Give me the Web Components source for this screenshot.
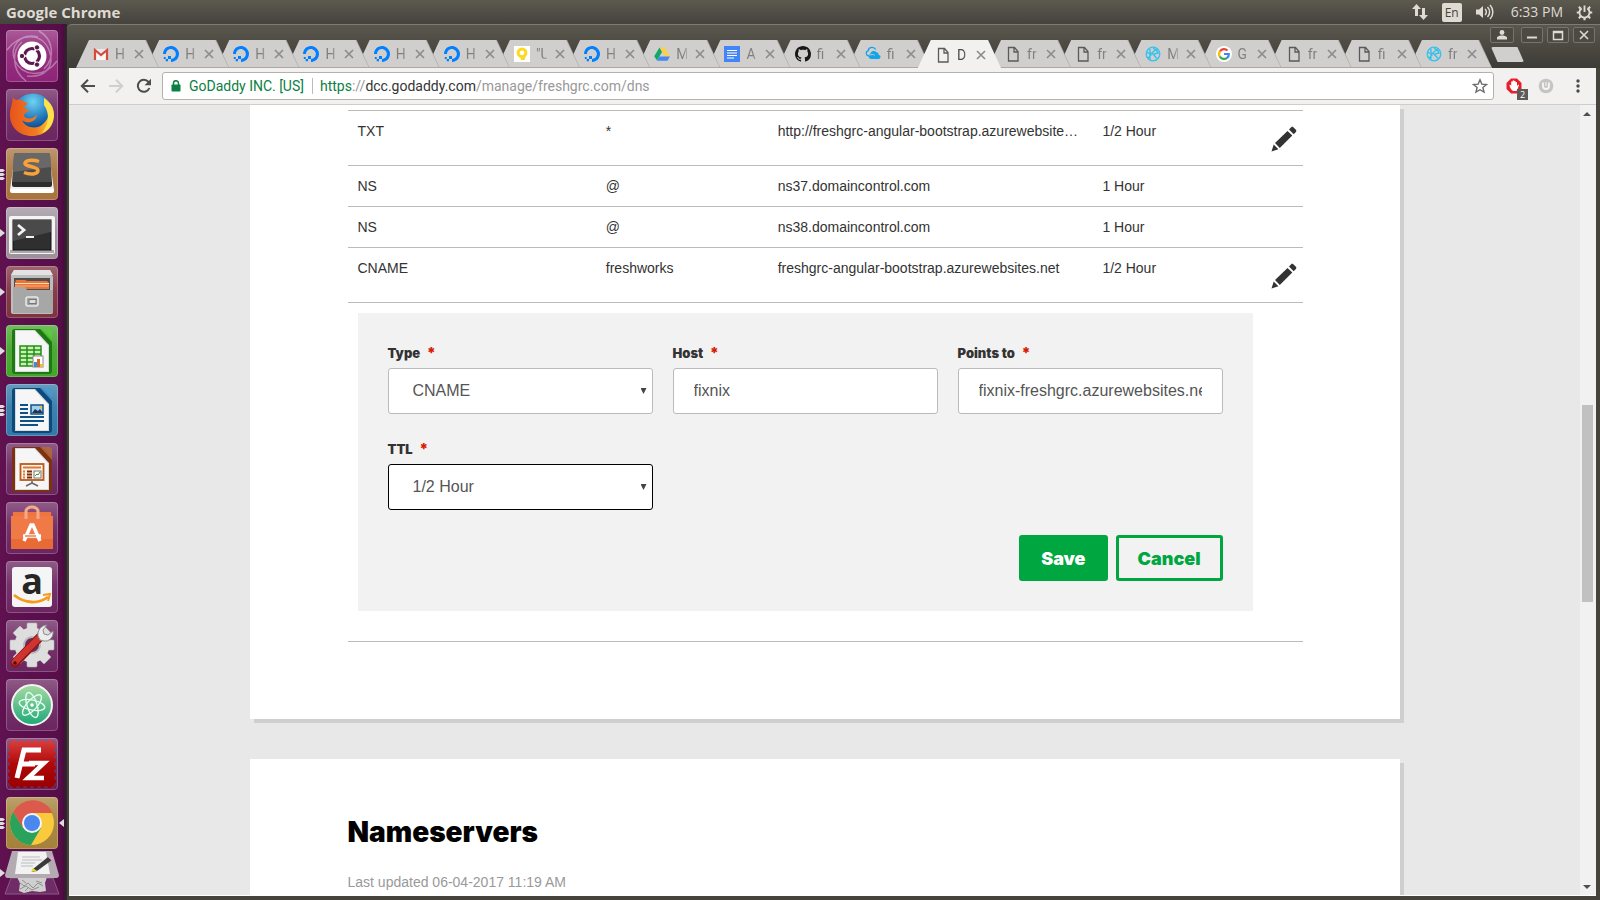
<!DOCTYPE html>
<html lang="en">
<head>
<meta charset="utf-8">
<title>DNS Management</title>
<style>
  html, body { margin: 0; height: 100%; }
  body { font-family: "Liberation Sans", Arial, sans-serif; font-size: 14px; color: #333; overflow: hidden; }
</style>
</head>
<body>
<desktop-shell></desktop-shell>

<script>
/* Shared helper: attaches an open shadow root with the given markup. */
class Base extends HTMLElement {
  connectedCallback() {
    if (this.shadowRoot) return;
    this.attachShadow({ mode: 'open' }).innerHTML =
      '<style>*{box-sizing:border-box}button{font:inherit;color:inherit;border:0;padding:0;margin:0;background:none;cursor:pointer}svg{display:block}</style>' + this.render();
  }
  attr(n, d = '') { return this.getAttribute(n) || d; }
}
const define = (n, c) => customElements.define(n, c);

/* ---------- small icons: [viewBox, markup] ---------- */
const DO = ['0 0 16 16', '<path d="M8 16v-3.1c3.3 0 5.8-3.2 4.5-6.7A4.8 4.8 0 0 0 9.700 3.400C6.200 2.200 3 4.700 3 8H0C0 2.800 5-1.300 10.500.4c2.400.7 4.300 2.700 5.100 5.100C17.300 11 13.200 16 8 16z" fill="#0080ff"/><path d="M5 10h3v3H5zM2.700 13H5v2.200H2.700zM.8 11h1.900v2H.8z" fill="#0080ff"/>'];
const ICONS = {
  gmail: ['0 0 16 16', '<path d="M1 3h14v11H1z" fill="#e8e8e8"/><path d="M3 5l5 4 5-4v9H3z" fill="#f8f8f8"/><path d="M2 14V4l6 5 6-5v10" fill="none" stroke="#d54b3d" stroke-width="2.200"/>'],
  ocean: DO,
  keep: ['0 0 16 16', '<path d="M0 0h16v16H0z" fill="#fff"/><circle cx="8" cy="6.800" r="3.900" fill="none" stroke="#fdd922" stroke-width="3"/><path d="M6.500 10.500h5L10.500 14H7z" fill="#fdd922"/>'],
  drive: ['0 0 16 16', '<path d="M5.500 1.500h5L16 10.500h-5z" fill="#ffcf48"/><path d="M5.500 1.500L8 6 3 14.500.2 10.300z" fill="#17a765"/><path d="M5.500 10.500H16l-2.600 4.200H3z" fill="#4587f4"/>'],
  docs: ['0 0 16 16', '<path d="M0 0h16v16H0z" fill="#4285f4"/><path d="M3 4.500h10M3 7h10M3 9.500h10M3 12h7" stroke="#fff" stroke-width="1.200"/>'],
  github: ['0 0 16 16', '<path fill="#181717" d="M8 0C3.580 0 0 3.580 0 8c0 3.540 2.290 6.530 5.470 7.590.4.070.55-.17.55-.38 0-.19-.01-.82-.01-1.490-2.010.37-2.530-.49-2.690-.94-.09-.23-.48-.94-.82-1.130-.28-.15-.68-.52-.01-.53.63-.01 1.080.58 1.230.82.72 1.210 1.870.87 2.330.66.07-.52.28-.87.51-1.070-1.780-.2-3.640-.89-3.640-3.950 0-.87.31-1.590.82-2.150-.08-.2-.36-1.020.08-2.120 0 0 .67-.21 2.200.82.64-.18 1.320-.27 2-.27s1.360.09 2 .27c1.530-1.040 2.200-.82 2.200-.82.44 1.100.16 1.920.08 2.120.51.56.82 1.270.82 2.150 0 3.070-1.870 3.750-3.650 3.950.29.25.54.73.54 1.480 0 1.070-.01 1.930-.01 2.200 0 .21.15.46.55.38A8.010 8.010 0 0 0 16 8c0-4.420-3.580-8-8-8z"/>'],
  cloud: ['0 0 18 16', '<path d="M5 10H4a2.800 2.800 0 0 1-.5-5.500 4.500 4.500 0 0 1 8.500-1.500" fill="none" stroke="#12a5ea" stroke-width="1.500"/><path d="M7 13.500a3 3 0 0 1-1-5.800A4 4 0 0 1 13 6a3 3 0 0 1 2.500 3 2.300 2.300 0 0 1 .3 4.500z" fill="#12a5ea"/><path d="M5 9.500c2-1 4-1.500 6 0" stroke="#d0cfcd" fill="none"/>'],
  file: ['0 0 16 16', '<path d="M3.500 1.500h6l3.500 4v9.500H3.500z M9 1.500V6h4" fill="none" stroke="#5a5a5a" stroke-width="1.300"/>'],
  fixnix: ['0 0 16 16', '<g fill="none" stroke="#35c1ee"><circle cx="8" cy="8" r="6.800" stroke-width="1.300"/><path d="M5 3v10M5 8.500l6.500-5.500M7 7l5 5.500M2 6l4 3-3 3M11 3l2 4-4 1M8 2l4 3" stroke-width="1.400"/></g>'],
  google: ['0 0 16 16', '<circle cx="8" cy="8" r="8" fill="#fff"/><g fill="none" stroke-width="2.200"><path d="M4 5.300A4.900 4.900 0 0 1 11.500 4.500" stroke="#ea4335"/><path d="M3.800 10.600a5 5 0 0 1 .2-5.400" stroke="#fbbc05"/><path d="M3.800 10.500a4.900 4.900 0 0 0 7.300 1.300" stroke="#34a853"/><path d="M8 8h4.800c.1 1.500-.5 2.900-1.700 4" stroke="#4285f4"/></g>'],
  back: ['0 0 16 16', '<path d="M15 8H2M8 1.800L1.800 8 8 14.200" fill="none" stroke="#4d4d4d" stroke-width="2"/>'],
  forward: ['0 0 16 16', '<path d="M1 8h13M8 1.800L14.200 8 8 14.200" fill="none" stroke="#cfcfcf" stroke-width="2"/>'],
  reload: ['0 0 16 16', '<path d="M13.400 10A6 6 0 1 1 12.500 4L14 5.600" fill="none" stroke="#4d4d4d" stroke-width="2"/><path d="M15 .8v6.400H8.600z" fill="#4d4d4d"/>'],
  lock: ['0 0 10 12', '<path d="M2.500 5V3.200a2.500 2.500 0 0 1 5 0V5" fill="none" stroke="#0b8043" stroke-width="1.500"/><rect x=".5" y="4.500" width="9" height="7" rx=".8" fill="#0b8043"/>'],
  star: ['0 0 16 16', '<path d="M8 1.800l1.800 4.300 4.700.4-3.600 3 1.100 4.600L8 11.700l-4 2.400 1.100-4.600-3.600-3 4.700-.4z" fill="none" stroke="#6b6b6b" stroke-width="1.400"/>'],
  abp: ['0 0 16 16', '<path d="M5 .5h6L15.500 5v6L11 15.500H5L.5 11V5z" fill="#e5202b"/><path d="M5 11c-1-1.500-1.500-3-1.500-4 .8-.5 1.300 0 1.700 1V4c.1-.9 1.300-.9 1.400 0V3c.1-.9 1.400-.9 1.500 0v.5c.1-.9 1.400-.9 1.500 0V4.500c.2-.8 1.300-.8 1.400 0V8l1 -1.200c.9-.3 1.200.3.8 1L11 12.500c-1.500 1-4.500 1-6-1.500z" fill="#fff"/>'],
  ublock: ['0 0 16 16', '<circle cx="8" cy="8" r="7.300" fill="#c4c4c4"/><path d="M5 4.500V8a3 3 0 0 0 6 0V4.500" fill="none" stroke="#f5f5f5" stroke-width="1.800"/><path d="M8 4v4" stroke="#f5f5f5"/>'],
  dots: ['0 0 16 16', '<g fill="#4a4a4a"><circle cx="8" cy="3" r="1.700"/><circle cx="8" cy="8" r="1.700"/><circle cx="8" cy="13" r="1.700"/></g>'],
  updown: ['0 0 18 18', '<g fill="#dfdbd2"><path d="M5.500 1L10 6H7v7H4V6H1z"/><path d="M12.500 17L8 12h3V5h3v7h3z"/></g>'],
  volume: ['0 0 20 18', '<path d="M1 6.500h3L8 3v12l-4-3.500H1z" fill="#dfdbd2"/><path d="M10 6a4 4 0 0 1 0 6M12.500 4a7 7 0 0 1 0 10M15 2a10 10 0 0 1 0 14" fill="none" stroke="#dfdbd2" stroke-width="1.500"/>'],
  power: ['0 0 18 18', '<path d="M6 4.600a5.400 5.400 0 1 0 6 0M9 1.500v7" fill="none" stroke="#dfdbd2" stroke-width="2"/><g stroke="#dfdbd2" stroke-width="2.200"><path d="M3 3l2 2M15 3l-2 2M.8 9H3.500M17.200 9h-2.700M3 15l2-2M15 15l-2-2M9 17.200v-2.700"/></g>'],
  pencil: ['0 0 26 26', '<path d="M.5 25.500l2.200-7 4.700 4.700zM4 17L16.500 5l4.800 4.600L8.800 22zM18 3.500l2.200-2.300c.6-.6 1.500-.6 2.100 0l2.600 2.600c.6.6.6 1.500 0 2.100l-2.200 2.300z" fill="#333"/>'],
  user: ['0 0 12 12', '<circle cx="6" cy="3.500" r="2.400" fill="#dfdbd2"/><path d="M1 10.500V8.200C2 7 4 6.500 6 6.500s4 .5 5 1.700v2.300z" fill="#dfdbd2"/>'],
  min: ['0 0 12 12', '<path d="M1 8.500h10" stroke="#dfdbd2" stroke-width="2"/>'],
  max: ['0 0 12 12', '<path d="M1.500 2.500h9v8h-9zM1.500 3.500h9" fill="none" stroke="#dfdbd2" stroke-width="1.500"/>'],
  close: ['0 0 12 12', '<path d="M2 2l8 8M10 2l-8 8" stroke="#dfdbd2" stroke-width="1.600"/>'],
  tabx: ['0 0 10 10', '<path d="M1 1l8 8M9 1L1 9" stroke="#8c8c8c" stroke-width="1.700"/>'],
};
define('ui-icon', class extends Base {
  render() {
    const [vb, body] = ICONS[this.attr('name')];
    const s = this.attr('size', '16');
    return `<style>:host{display:block;flex:none}</style><svg width="${s}" height="${s}" viewBox="${vb}" aria-hidden="true">${body}</svg>`;
  }
});

/* ---------- launcher artwork, each on a 52x52 tile ---------- */
const libre = (dark, mid, body) => `<path d="M9 4h27l10 10v32a3 3 0 0 1-3 3H9a3 3 0 0 1-3-3V7a3 3 0 0 1 3-3z" fill="${dark}"/><path d="M34 4h9a3 3 0 0 1 3 3v10z" fill="${mid}" opacity=".8"/><path d="M9 5h20l14 15v27H9z" fill="#d9d9d9"/><path d="M10 6h18.500L42 20.500V46H10z" fill="#f6f6f6"/>${body}`;
const gear = Array.from({ length: 8 }, (_, i) => `<rect x="21" y="3" width="10" height="10" rx="1" transform="rotate(${i * 45} 26 25)"/>`).join('');
const stamp = Array.from({ length: 7 }, (_, i) => { const p = 5 + i * 7; return `<circle cx="${p}" cy="2" r="2"/><circle cx="${p}" cy="50" r="2"/><circle cx="2" cy="${p}" r="2"/><circle cx="50" cy="${p}" r="2"/>`; }).join('');
const ART = {
  ubuntu: '<g fill="none" stroke="#fff" opacity=".35"><path d="M1 20C15 2 36 3 43 20s-5 28-22 26M51 31C37 50 15 45 9 31S14 2 32 7M20 51C5 40 6 20 16 12M33 1c14 8 17 26 5 38" stroke-width="1.500"/></g><circle cx="26" cy="26" r="14.500" fill="#fff"/><circle cx="26" cy="26" r="7.500" fill="none" stroke="#5e1a50" stroke-width="3.200"/><path d="M26 26H16M26 26l5-9M26 26l5 9" stroke="#fff" stroke-width="1.600"/><g fill="#5e1a50" stroke="#fff" stroke-width="1"><circle cx="16" cy="26" r="2.700"/><circle cx="31" cy="17.400" r="2.700"/><circle cx="31" cy="34.600" r="2.700"/></g>',
  firefox: '<defs><radialGradient id="a" cx=".5" cy=".2" r=".8"><stop offset="0" stop-color="#6fd3f3"/><stop offset=".6" stop-color="#1a6db5"/><stop offset="1" stop-color="#0b2a63"/></radialGradient><linearGradient id="b" x1="0" x2="1"><stop offset="0" stop-color="#e8541c"/><stop offset=".6" stop-color="#ef7c20"/><stop offset="1" stop-color="#ffd93b"/></linearGradient></defs><circle cx="27" cy="25" r="20.500" fill="url(#a)"/><path d="M7 8c1 2 2 3 4 3 3-1 6 0 7 2 2 0 3 1 4 2-2 1-4 2-4 4 1 1 5 1 5 3-2 1-5 2-5 5 2 3 8 4 13-1-1 8-11 9-15 5 3 8 15 10 21 4 7-6 8-15 3-24 5 3 8 8 8 15 0 12-9 21-22 21C13 47 4 38 4 26c0-7 2-9 3-18z" fill="url(#b)"/><path d="M38 9c8 5 11 14 9 22-2 7-6 11-11 13 7-8 8-20 2-28z" fill="#ffe04a"/>',
  sublime: '<path d="M9 6h34l5 36H4z" fill="#f0f0f0"/><path d="M4 41h44v2a2 2 0 0 1-2 2H6a2 2 0 0 1-2-2z" fill="#fff"/><path d="M10 5h32a2 2 0 0 1 2 2l2 27H6L8 7a2 2 0 0 1 2-2z" fill="#4c4c4c"/><path d="M10 5h32a2 2 0 0 1 2 2l1 12L7 24 8 7a2 2 0 0 1 2-2z" fill="#686868"/><path d="M6 34h40v3a2 2 0 0 1-2 2H8a2 2 0 0 1-2-2z" fill="#2d2d2d"/><path d="M33 13.500c-5-2-13-2-14 1.500s13 3.500 13 7.500-8 4.500-14 2" fill="none" stroke="#f9a23a" stroke-width="3.500"/>',
  terminal: '<rect x="3" y="9" width="46" height="38" rx="2" fill="#f4f4f4"/><rect x="4" y="43" width="44" height="3" fill="#aaa"/><rect x="7" y="13" width="38" height="30" fill="#2f2f2f" stroke="#111"/><path d="M7 13h38v12L7 34z" fill="#4a4a4a"/><path d="M12 18l6 5-6 5" fill="none" stroke="#f2f2f2" stroke-width="2.800"/><path d="M20 30h8" stroke="#f2f2f2" stroke-width="2"/>',
  files: '<path d="M8 4h36l3 7v35a2 2 0 0 1-2 2H7a2 2 0 0 1-2-2V9z" fill="#bdbdbd"/><path d="M8 4h36l3 5H5z" fill="#e3e3e3"/><path d="M8 12h36v12H8z" fill="#4e4e4e"/><path d="M10 14h9l2 1h20l2 2v6H9v-6z" fill="#e8743a"/><path d="M9 17.500h34" stroke="#ffd9a8"/><path d="M9 20h34" stroke="#f6b27a"/><path d="M7 21h12l2 3h26v21a2 2 0 0 1-2 2H7z" fill="#a7a7a7"/><rect x="20" y="31" width="12" height="9" rx="2" fill="#a7a7a7" stroke="#e9e9e9" stroke-width="1.500"/><rect x="23" y="33.500" width="7" height="4" fill="#ddd" stroke="#777"/>',
  calc: libre('#1d7a12', '#5bcb3f', '<path d="M14 21h21v20H14z" fill="#c8f3b0"/><path d="M14 21h21v20H14zM14 25h21M14 29h21M14 33h21M14 37h21M21 21v20M28 21v20" fill="none" stroke="#238f18" stroke-width="1.500"/><rect x="27" y="31" width="10" height="11" fill="#fff" stroke="#888"/><path d="M28 42v-5h3v5z" fill="#3a8fd0"/><path d="M31 42v-8h3v8z" fill="#e2632a"/><path d="M34 42v-3h3v3z" fill="#f0c02c"/>'),
  writer: libre('#0a4a7d', '#4d97cc', '<path d="M14 21h8M14 25h8M14 29h8M14 33h24M14 37h24M14 41h18" stroke="#0f5288" stroke-width="2"/><rect x="25" y="21" width="12" height="9" fill="#9fd0f0" stroke="#0f5288" stroke-width="1.500"/><path d="M26 29l3-4 3 2 2-2 3 4z" fill="#23384a"/><circle cx="35" cy="23" r="1.200" fill="#f0c02c"/>'),
  impress: libre('#7c3110', '#b46c3a', '<rect x="14.500" y="21" width="23" height="16" fill="#fff2e2" stroke="#b55a22" stroke-width="1.800"/><path d="M17 24.500h18" stroke="#d87a3a" stroke-width="2"/><path d="M17 28.500h2M17 31.500h2M17 34.500h2" stroke="#d87a3a" stroke-width="2"/><path d="M21 28.500h5M21 31.500h5M21 34.500h5" stroke="#7a2c0e" stroke-width="2"/><rect x="28" y="28" width="7" height="7" fill="#fff" stroke="#777"/><path d="M29 33l2-2 1 1 2-3" fill="none" stroke="#2f9a2b"/><path d="M26 38v2l-6 3M26 40l6 3" fill="none" stroke="#666" stroke-width="1.500"/>'),
  software: '<path d="M7 10h38l2 36H5z" fill="#ee7440"/><path d="M5 14h42v32H5z" fill="#f07a45"/><path d="M5 37h42v10H5z" fill="#e86a35"/><path d="M20 17V9a6 4 0 0 1 12 0v8" fill="none" stroke="#f6a988" stroke-width="3"/><path d="M18 39l7-16h2l7 16" fill="none" stroke="#fff" stroke-width="3.500"/><path d="M17 34h18" stroke="#fff" stroke-width="3.500"/><path d="M19 34h11" stroke="#e2602a" stroke-width="1.200"/>',
  amazon: '<rect x="6" y="6" width="40" height="40" rx="3" fill="#f5f5f5"/><text x="26" y="33" text-anchor="middle" font-family="Open Sans, sans-serif" font-weight="700" font-size="36" fill="#262626">a</text><path d="M8 34c11 9 25 9 34 2" fill="none" stroke="#f79a1c" stroke-width="2.800"/><path d="M37 34l7-1-2 7" fill="none" stroke="#f79a1c" stroke-width="2"/>',
  settings: `<g fill="#dedede" stroke="#b4b4b4" stroke-width=".6">${gear}</g><circle cx="26" cy="25" r="17.500" fill="#dedede"/><circle cx="26" cy="25" r="8" fill="#6d2c62" stroke="#b8b8b8" stroke-width="2"/><path d="M9 43L34 17" stroke="#8e1515" stroke-width="9" stroke-linecap="round"/><path d="M9 42L34 17" stroke="#cf3430" stroke-width="6.500" stroke-linecap="round"/><circle cx="9" cy="43" r="1.800" fill="#4a0d0d"/><path d="M32 16c-1-5 3-11 9-11l-4 5 1 4 4 1 5-4c1 6-4 11-9 10l-4-1z" fill="#ececec" stroke="#8b8b8b"/>`,
  atom: '<defs><linearGradient id="a" x2="0" y2="1"><stop offset="0" stop-color="#a6dba0"/><stop offset="1" stop-color="#1fa77a"/></linearGradient></defs><circle cx="26" cy="26" r="20" fill="url(#a)" stroke="#f4f4f4" stroke-width="2"/><g fill="none" stroke="#e4fff0" stroke-width="1.400"><ellipse cx="26" cy="26" rx="13" ry="5" transform="rotate(12 26 26)"/><ellipse cx="26" cy="26" rx="13" ry="5" transform="rotate(72 26 26)"/><ellipse cx="26" cy="26" rx="13" ry="5" transform="rotate(132 26 26)"/></g><circle cx="26" cy="26" r="1.800" fill="#fff"/>',
  filezilla: `<defs><mask id="m"><path d="M2 2h48v48H2z" fill="#fff"/><g fill="#000">${stamp}</g></mask><linearGradient id="a" x2="0" y2="1"><stop offset="0" stop-color="#d94040"/><stop offset=".5" stop-color="#b00808"/><stop offset="1" stop-color="#980000"/></linearGradient></defs><path d="M2 2h48v48H2z" fill="url(#a)" mask="url(#m)"/><g fill="none" stroke="#fff" stroke-width="5"><path d="M35 12H18L11 40M14 26h15"/><path d="M23 25h15L22 40h16" stroke-width="4.500"/></g>`,
  chrome: '<circle cx="26" cy="26" r="22" fill="#f9cb3c"/><path d="M26 16h20.500A22 22 0 0 0 7 15l9.500 16z" fill="#db5a4c"/><path d="M7 15a22 22 0 0 0 18 33l10-17-18 0z" fill="#29a25c"/><circle cx="26" cy="26" r="10" fill="#f4f4f4"/><circle cx="26" cy="26" r="8" fill="#4a87ee"/>',
};
define('launcher-tile', class extends Base {
  render() {
    const n = +this.attr('running', '0');
    const pip = '<svg width="5" height="3" viewBox="0 0 5 3"><path d="M0 0h3l2 1.500L3 3H0z" fill="#ddd"/></svg>';
    const pips = n === 1 ? '<svg width="5" height="8" viewBox="0 0 5 8"><path d="M0 0l5 4-5 4z" fill="#ddd"/></svg>' : pip.repeat(n);
    return `<style>
      :host{display:grid;grid-template-columns:6px 52px 6px;align-items:center}
      .pips{display:grid;gap:1px}
      button{width:52px;height:52px;border-radius:4px;background:linear-gradient(#ffffff40,#ffffff10 45%,#ffffff00),${this.attr('tint', '#6b2560')};box-shadow:inset 0 0 0 1px #ffffff38}
      button svg{overflow:visible}
      .focus{justify-self:end}
    </style>
    <span class="pips">${pips}</span>
    <button type="button" aria-label="${this.attr('app')}"><svg width="52" height="52" viewBox="0 0 52 52">${ART[this.attr('app')]}</svg></button>
    <span class="focus">${this.hasAttribute('focused') ? '<svg width="5" height="8" viewBox="0 0 5 8"><path d="M5 0L0 4l5 4z" fill="#ddd"/></svg>' : ''}</span>`;
  }
});
define('launcher-stack', class extends Base {
  render() {
    return `<style>:host{display:grid;grid-template-columns:4px 56px;align-items:center}</style>
    <svg width="5" height="8" viewBox="0 0 5 8"><path d="M0 0l5 4-5 4z" fill="#ddd"/></svg>
    <svg width="56" height="46" viewBox="0 0 56 46"><path d="M7 28h42l6 16H1z" fill="#6f2c66" stroke="#8a5a82"/><path d="M13 27h30l-2 6 1 8-6 1-8-1-8 2-5-2 1-8z" fill="#cfcfcf"/><path d="M15 32l5 4 4-3 5 5 5-5 5 3M16 39l6-3 6 4 7-3M18 30l4 3M32 31l6 2M24 38l-3 3" stroke="#8f8f8f" fill="none"/><path d="M8 1h40l7 24a3 3 0 0 1-2 3H3a3 3 0 0 1-2-3z" fill="#b4aab2"/><path d="M14 2h28l4 22H11z" fill="#f2f2f2"/><path d="M18 7h18M18 10h20M17 13h14M17 16h12" stroke="#bbb"/><path d="M29 19L44 7l4 3-15 11-5 1z" fill="#3a3a3a"/><path d="M44 7l3-1 3 2-2 3z" fill="#dca0c8"/><path d="M27 22l2-4 4 3z" fill="#e5d83a"/></svg>`;
  }
});
define('app-launcher', class extends Base {
  render() {
    return `<style>
      :host{display:block;width:66px;background:linear-gradient(90deg,#5f1150,#560e49 60px,#4a0b3e 64px,#33202e 65px);overflow:hidden}
      nav{display:flex;flex-direction:column;gap:7px;padding-top:6px}
      launcher-stack{margin-top:-6px}
    </style><nav aria-label="Launcher">
      <launcher-tile app="ubuntu" tint="#8e2478"></launcher-tile>
      <launcher-tile app="firefox"></launcher-tile>
      <launcher-tile app="sublime" tint="#a8743f" running="3"></launcher-tile>
      <launcher-tile app="terminal" tint="#9d909b" running="1"></launcher-tile>
      <launcher-tile app="files" tint="#7e3240" running="1"></launcher-tile>
      <launcher-tile app="calc" tint="#43a52b" running="1"></launcher-tile>
      <launcher-tile app="writer" tint="#3279a8" running="3"></launcher-tile>
      <launcher-tile app="impress"></launcher-tile>
      <launcher-tile app="software"></launcher-tile>
      <launcher-tile app="amazon"></launcher-tile>
      <launcher-tile app="settings"></launcher-tile>
      <launcher-tile app="atom"></launcher-tile>
      <launcher-tile app="filezilla"></launcher-tile>
      <launcher-tile app="chrome" tint="#a5813a" running="3" focused></launcher-tile>
      <launcher-stack></launcher-stack>
    </nav>`;
  }
});

/* ---------- top panel ---------- */
define('top-panel', class extends Base {
  render() {
    return `<style>
      :host{display:flex;align-items:center;height:24px;padding:0 7px 0 6px;background:linear-gradient(#5c594f,#45433d);color:#dfdbd2;font:14px/24px "Open Sans",sans-serif}
      strong{flex:1;font-size:15px}
      .status{display:flex;align-items:center;gap:13px}
      .lang{height:19px;width:20px;border-radius:2px;background:#dfdbd2;color:#45433d;font:12px/20px "Open Sans",sans-serif;text-align:center}
      time{padding-left:3px}
    </style>
    <strong>Google Chrome</strong>
    <div class="status">
      <ui-icon name="updown" size="18"></ui-icon><span class="lang">En</span>
      <ui-icon name="volume" size="20"></ui-icon><time>6:33 PM</time><ui-icon name="power" size="17"></ui-icon>
    </div>`;
  }
});

/* ---------- browser chrome ---------- */
define('browser-tab', class extends Base {
  render() {
    const active = this.hasAttribute('active');
    return `<style>
      :host{display:block;position:relative;flex:1 1 0;min-width:0;height:28px;margin-right:-13px;--cut:polygon(0 100%,13px 0,calc(100% - 13px) 0,100% 100%)}
      .edge{height:28px;background:${active ? '#f2f1f0' : '#a9a8a6'};clip-path:var(--cut);padding-right:1px}
      .fill{height:${active ? 28 : 27}px;display:flex;align-items:center;padding:1px 0 0 17px;background:${active ? '#f2f1f0' : '#d0cfcd'};clip-path:var(--cut)}
      .title{width:11px;margin:0 8px 0 6px;overflow:hidden;white-space:nowrap;font:14px/20px Roboto,sans-serif;color:${active ? '#4c4c4c' : '#808080'};-webkit-mask:linear-gradient(90deg,#000 60%,#0006)}
      button{flex:none}
    </style>
    <div class="edge"><div class="fill"><ui-icon name="${this.attr('icon')}"></ui-icon><span class="title"><slot></slot></span>
    <button type="button" aria-label="Close tab"><ui-icon name="tabx" size="10"></ui-icon></button></div></div>`;
  }
});
define('tab-strip', class extends Base {
  render() {
    const tabs = [['gmail', 'H'], ['ocean', 'H'], ['ocean', 'H'], ['ocean', 'H'], ['ocean', 'H'], ['ocean', 'H'], ['keep', '"U'], ['ocean', 'H'], ['drive', 'M'], ['docs', 'A'], ['github', 'fi'], ['cloud', 'fi'], ['file', 'D', 1], ['file', 'fr'], ['file', 'fr'], ['fixnix', 'M'], ['google', 'G'], ['file', 'fr'], ['file', 'fi'], ['fixnix', 'fr']];
    return `<style>
      :host{display:flex;height:44px;border-radius:5px 0 0 0;border-top:1px solid #7d7b74;background:linear-gradient(#5a574e,#3d3b36)}
      .tabs{flex:1;display:flex;align-items:flex-end;padding-right:13px;min-width:0}
      .new{width:33px;height:15px;margin:22px 0 0 -1px;background:#d0cfcd;border-radius:2px;clip-path:polygon(0 0,80% 0,100% 100%,20% 100%)}
      .side{position:relative;width:108px}
      .win{display:flex;gap:4px;padding-top:2px;position:absolute;right:5px;top:0}
      .win button{width:22px;height:16px;display:grid;place-items:center;border:1px solid #77746b;border-radius:2px;background:#4c4a43}
      .win button:first-child{width:24px;margin-right:3px}
    </style>
    <div class="tabs">${tabs.map(([i, t, a], n) => `<browser-tab icon="${i}" style="z-index:${a ? 30 : 20 - n}"${a ? ' active' : ''}>${t}</browser-tab>`).join('')}</div>
    <div class="side"><button type="button" class="new" aria-label="New tab"></button>
      <div class="win">${['user', 'min', 'max', 'close'].map(i => `<button type="button" aria-label="${i}"><ui-icon name="${i}" size="12"></ui-icon></button>`).join('')}</div></div>`;
  }
});
define('tool-bar', class extends Base {
  render() {
    return `<style>
      :host{display:flex;align-items:center;height:37px;padding:0 10px 0 11px;background:#f2f1f0;border-bottom:1px solid #cfcdca;gap:12px}
      .omni{flex:1;height:28px;display:flex;align-items:center;margin-left:-2px;padding:0 5px 0 7px;border:1px solid #b3b1ae;border-radius:3px;background:#fff;font:14px/20px Roboto,sans-serif;color:#999}
      .cert{color:#0b8043;padding:0 8px 0 7px;border-right:1px solid #bbb;line-height:16px;white-space:nowrap}
      .url{flex:1;padding-left:7px}
      .s{color:#0b8043}.d{color:#333}
      .ext{display:flex;gap:16px;align-items:center}
      .abp{position:relative}
      .abp b{position:absolute;left:11px;top:11px;width:11px;height:11px;background:#5b5b5b;color:#fff;font:9px/11px "Open Sans",sans-serif;text-align:center}
    </style>
    <button type="button" aria-label="Back"><ui-icon name="back"></ui-icon></button>
    <button type="button" aria-label="Forward"><ui-icon name="forward"></ui-icon></button>
    <button type="button" aria-label="Reload"><ui-icon name="reload"></ui-icon></button>
    <div class="omni"><ui-icon name="lock" size="12"></ui-icon><span class="cert">GoDaddy INC. [US]</span>
      <span class="url"><span class="s">https</span>://<span class="d">dcc.godaddy.com</span>/manage/freshgrc.com/dns</span>
      <button type="button" aria-label="Bookmark"><ui-icon name="star"></ui-icon></button></div>
    <div class="ext"><button type="button" class="abp" aria-label="Ad blocker"><ui-icon name="abp"></ui-icon><b>2</b></button>
      <button type="button" aria-label="Extension"><ui-icon name="ublock"></ui-icon></button>
      <button type="button" aria-label="Menu"><ui-icon name="dots"></ui-icon></button></div>`;
  }
});
define('page-scrollbar', class extends Base {
  render() {
    return `<style>
      :host{display:flex;flex-direction:column;width:16px;background:#f1f1f1}
      svg{margin:6px 5px 5px 3px}
      .a{flex:284}.b{flex:277}
      .thumb{flex:197;margin:0 3px 0 2px;background:#c1c1c1}
    </style>
    <svg width="8" height="5" viewBox="0 0 8 5"><path d="M0 5l4-4 4 4z" fill="#505050"/></svg>
    <div class="a"></div><div class="thumb"></div><div class="b"></div>
    <svg width="8" height="5" viewBox="0 0 8 5"><path d="M0 0l4 4 4-4z" fill="#505050"/></svg>`;
  }
});

/* ---------- page content ---------- */
define('page-card', class extends Base {
  render() {
    return `<style>
      :host{display:block;width:100%;max-width:1150px;box-sizing:border-box;padding:0 97px 0 98px;background:#fff;box-shadow:4px 4px 0 #cfcfcf}
    </style><slot></slot>`;
  }
});
define('dns-records', class extends Base {
  render() {
    const rows = [['TXT', '*', 'http://freshgrc-angular-bootstrap.azurewebsites.net', '1/2 Hour', 1], ['NS', '@', 'ns37.domaincontrol.com', '1 Hour'], ['NS', '@', 'ns38.domaincontrol.com', '1 Hour'], ['CNAME', 'freshworks', 'freshgrc-angular-bootstrap.azurewebsites.net', '1/2 Hour', 1]];
    return `<style>
      :host{display:block;padding-top:5px}
      table{width:100%;table-layout:fixed;border-collapse:collapse;border-top:1px solid #bbb;font-size:14px;line-height:20px}
      tr{border-bottom:1px solid #bbb}
      td{padding:10px 14px 10px 10px;vertical-align:top;overflow:hidden;text-overflow:ellipsis;white-space:nowrap}
      td:last-child{padding:6px 6px 0 0}
      button{display:block;margin-left:auto;padding:9px 0 13px}
      .type{width:26%}.host{width:18%}.value{width:34%}.ttl{width:14%}
    </style>
    <table><colgroup><col class="type"><col class="host"><col class="value"><col class="ttl"><col></colgroup><tbody>
    ${rows.map(r => `<tr>${r.slice(0, 4).map(c => `<td>${c}</td>`).join('')}<td>${r[4] ? '<button type="button" aria-label="Edit record"><ui-icon name="pencil" size="26"></ui-icon></button>' : ''}</td></tr>`).join('')}
    </tbody></table>`;
  }
});
define('form-field', class extends Base {
  render() {
    const v = this.attr('value');
    const ctl = this.attr('kind') === 'select'
      ? `<span class="sel"><select id="c"><option>${v}</option></select></span>`
      : `<input id="c" type="text" value="${v}">`;
    return `<style>
      :host{display:block;min-width:0}
      label{display:block;font:900 13px/21px Inter,sans-serif;color:#333;padding-bottom:4px}
      i{font-style:normal;font-size:15px;line-height:1;color:#db1802;margin-left:4px}
      input,select{display:block;width:100%;height:46px;margin:0;padding:0 20px;border:1px solid #bbb;border-radius:3px;background:#fff;color:#555;font:16px/20px "Liberation Sans",Arial,sans-serif;outline:0;appearance:none}
      select{padding:0 24px}
      :host([current]) select{border-color:#000}
      .sel{display:grid;align-items:center}
      .sel>*,.sel::after{grid-area:1/1}
      .sel::after{content:"";justify-self:end;width:6px;height:6px;margin-right:6px;background:#444;clip-path:polygon(0 0,100% 0,50% 100%);pointer-events:none}
    </style><label for="c">${this.attr('label')} <i>*</i></label>${ctl}`;
  }
});
define('ui-button', class extends Base {
  render() {
    return `<style>
      :host{display:block}
      button{height:46px;padding:1px 19px 0;border:3px solid #00a63f;border-radius:3px;background:#00a63f;color:#fff;font:900 18px/20px Inter,sans-serif}
      :host([outline]) button{background:transparent;color:#00a63f}
    </style><button type="button"><slot></slot></button>`;
  }
});
define('record-form', class extends Base {
  render() {
    return `<style>
      :host{display:block;padding:10px 50px 30px 10px;border-bottom:1px solid #bbb}
      form{background:#f2f2f2;padding:30px}
      .grid{display:grid;grid-template-columns:repeat(3,1fr);gap:25px 20px}
      .actions{display:flex;justify-content:flex-end;gap:8px;margin-top:25px}
    </style><form><div class="grid">
      <form-field kind="select" label="Type" value="CNAME"></form-field>
      <form-field label="Host" value="fixnix"></form-field>
      <form-field label="Points to" value="fixnix-freshgrc.azurewebsites.net"></form-field>
      <form-field kind="select" label="TTL" value="1/2 Hour" current></form-field>
    </div><div class="actions"><ui-button>Save</ui-button><ui-button outline>Cancel</ui-button></div></form>`;
  }
});
define('name-servers', class extends Base {
  render() {
    return `<style>
      :host{display:block;padding:55px 0 60px}
      h2{margin:0 0 22px;font:900 28px/36px Inter,sans-serif;color:#000}
      p{margin:0;font-size:14px;line-height:20px;color:#999}
    </style><h2>Nameservers</h2><p>Last updated 06-04-2017 11:19 AM</p>`;
  }
});
define('dns-page', class extends Base {
  render() {
    return `<style>
      :host{display:flex;flex-direction:column;align-items:center;gap:40px;background:#e8e8e8;overflow:hidden}
      page-card{flex:none}
      .end{height:77px}
    </style>
    <page-card><dns-records></dns-records><record-form></record-form><div class="end"></div></page-card>
    <page-card><name-servers></name-servers></page-card>`;
  }
});
define('browser-window', class extends Base {
  render() {
    return `<style>
      :host{display:flex;flex-direction:column;min-width:0;min-height:0;padding:0 4px 4px 2px;background:#45433c;border-left:1px solid #2a2926}
      tab-strip{margin:0 -4px 0 -2px;padding-left:9px}
      .view{flex:1;display:flex;min-height:0;border-bottom:1px solid #fff}
      dns-page{flex:1;min-width:0}
    </style>
    <tab-strip></tab-strip><tool-bar></tool-bar>
    <div class="view"><dns-page></dns-page><page-scrollbar></page-scrollbar></div>`;
  }
});
define('desktop-shell', class extends Base {
  render() {
    return `<style>
      :host{display:grid;grid-template:auto minmax(0,1fr)/auto minmax(0,1fr);height:100vh;background:#3c3b37}
      top-panel{grid-column:1/-1}
    </style><top-panel></top-panel><app-launcher></app-launcher><browser-window></browser-window>`;
  }
});
</script>
</body>
</html>
